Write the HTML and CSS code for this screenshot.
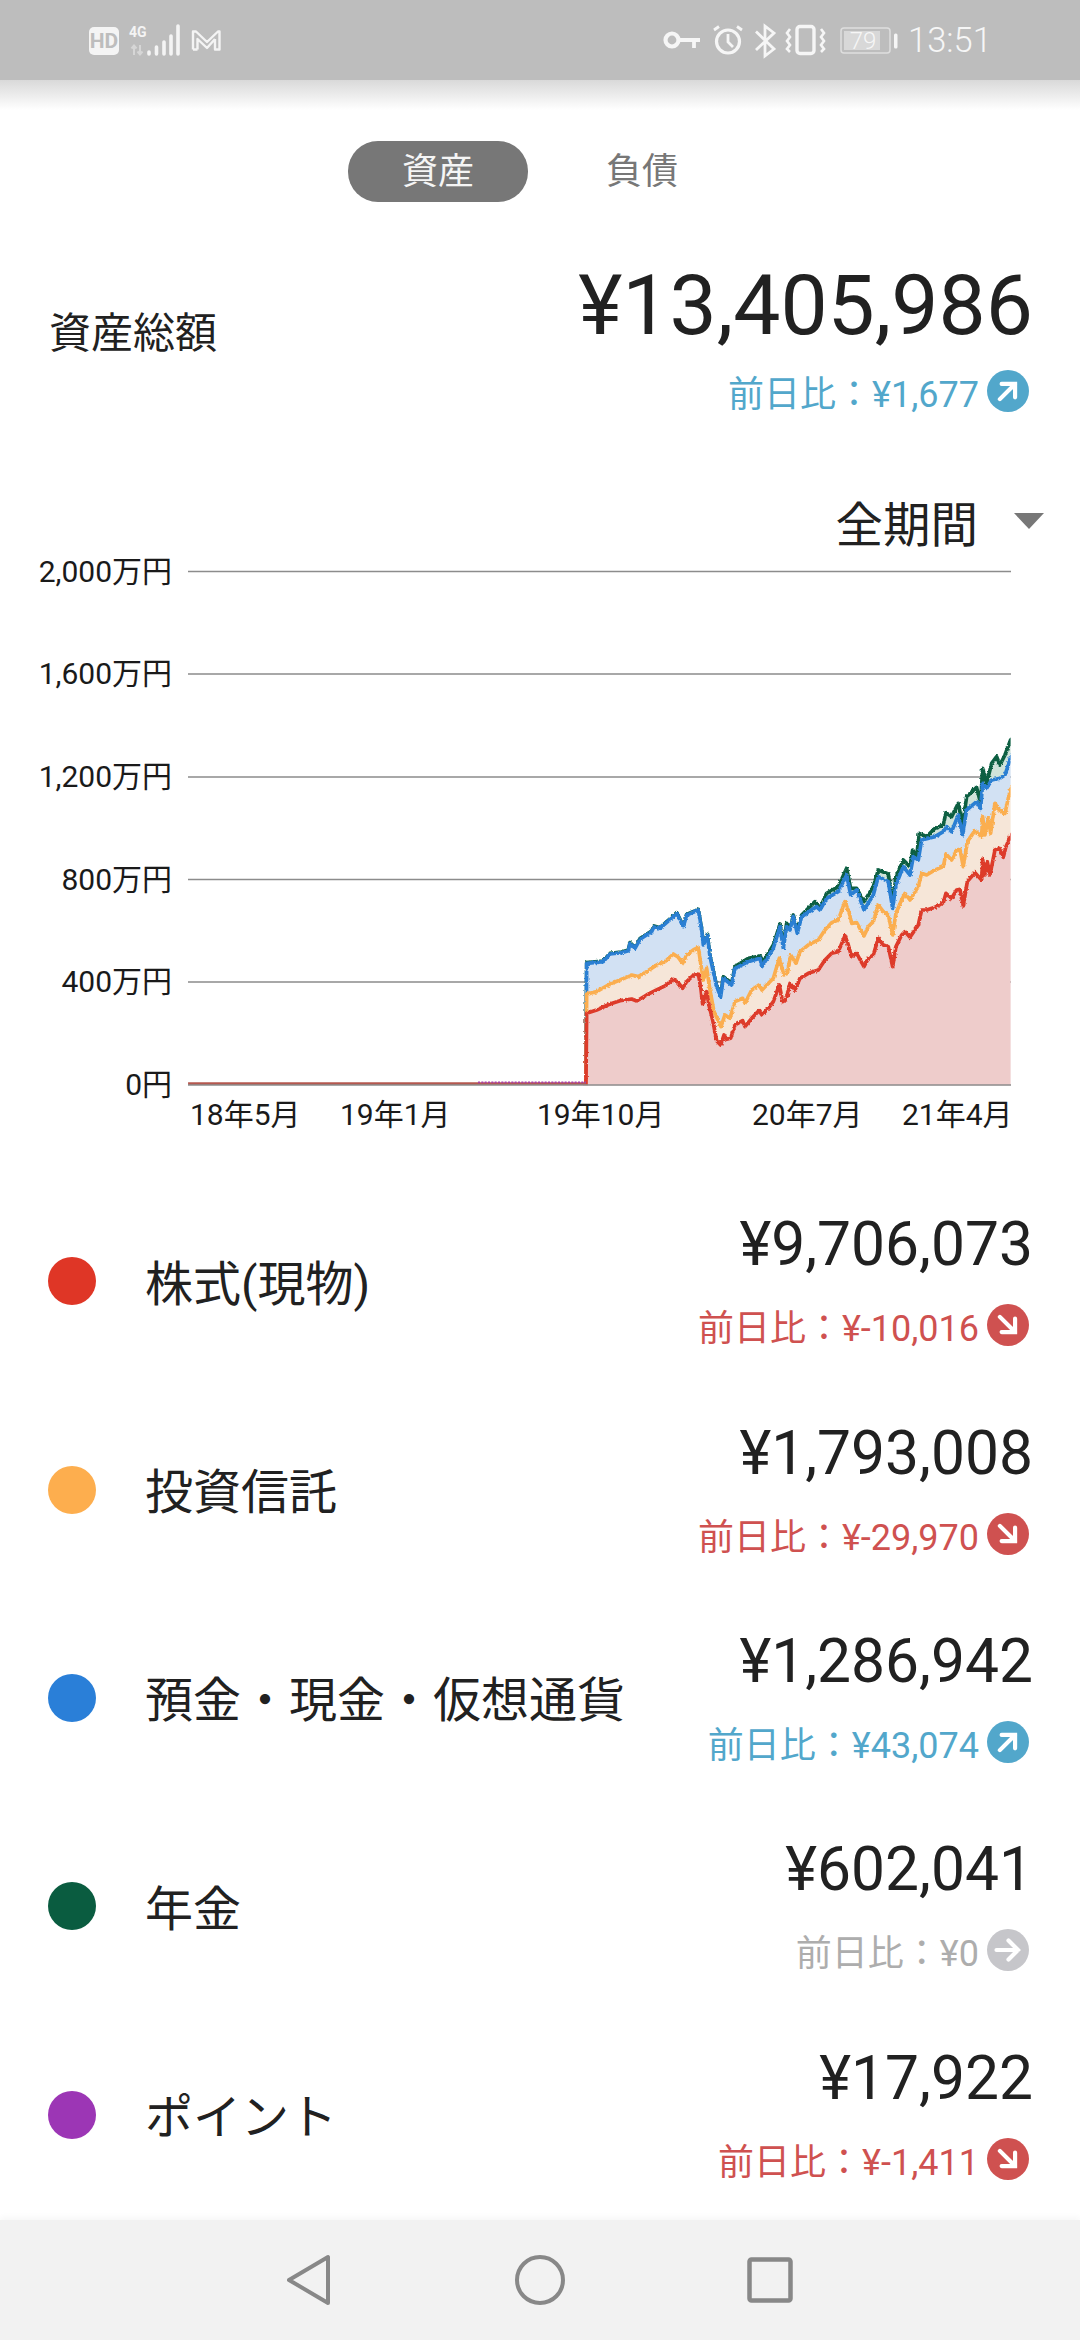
FILE: index.html
```html
<!DOCTYPE html>
<html lang="ja">
<head>
  <meta charset="UTF-8">
  <title>資産</title>
  <link rel="stylesheet" href="styles.css">
</head>
<body>

  <svg class="defs" width="0" height="0">
    <symbol id="arrow" viewBox="0 0 42 42">
      <path d="M9.500 21H31M21.500 11.500L31 21 21.500 30.500" fill="none" stroke="#fff" stroke-width="4.200" stroke-linecap="round"/>
    </symbol>
    <filter id="jitter" filterUnits="userSpaceOnUse" x="-1300" y="0" width="2800" height="1300">
      <feTurbulence type="fractalNoise" baseFrequency="0.15" numOctaves="2" seed="4"/>
      <feDisplacementMap in="SourceGraphic" scale="9" xChannelSelector="R" yChannelSelector="G"/>
    </filter>
  </svg>

  <div class="status-bar">
    <svg class="status-left" width="140" height="40" viewBox="89 22 140 40">
      <rect x="89" y="27" width="30" height="28" rx="5" fill="#f4f4f4"/>
      <text class="hd" x="104" y="48" text-anchor="middle">HD</text>
      <text class="net" x="129" y="37">4G</text>
      <path d="M134 55V46M131.500 48.500L134 45.500 136.500 48.500M140 45V54M137.500 51.500L140 54.500 142.500 51.500" fill="none" stroke="#d6d6d6" stroke-width="2"/>
      <path d="M149 54V52M156.500 54V47M164 54V42M171 54V36M178 54V26" fill="none" stroke="#f4f4f4" stroke-width="3.600" stroke-linecap="round"/>
      <path d="M193 49.500V31.500H196L207 42 218 31.500H219.500V49.500H215V39M197.500 49.500V39L207 48 215 39M193 49.500H197.500" fill="none" stroke="#f4f4f4" stroke-width="2.400" stroke-linejoin="round"/>
    </svg>
    <svg class="status-right" width="260" height="40" viewBox="660 22 260 40">
      <circle cx="672" cy="40" r="6.500" fill="none" stroke="#f6f6f6" stroke-width="4.200"/>
      <path d="M679 40H700M694 40V48" fill="none" stroke="#f6f6f6" stroke-width="3.800"/>
      <circle cx="728" cy="41.500" r="11.500" fill="none" stroke="#f6f6f6" stroke-width="3.200"/>
      <path d="M728 34V42L733 47M714 30L719 26.500M742 30L737 26.500" fill="none" stroke="#f6f6f6" stroke-width="2.800"/>
      <path d="M756 31.500L774 49 765 56V26L774 33 756 50" fill="none" stroke="#f6f6f6" stroke-width="2.800"/>
      <rect x="797" y="26.500" width="17" height="27" rx="3" fill="none" stroke="#f6f6f6" stroke-width="3.400"/>
      <path d="M790 29L787 33 790 37 787 41 790 45 787 49 790 52M821 29L824 33 821 37 824 41 821 45 824 49 821 52" fill="none" stroke="#f6f6f6" stroke-width="2.600"/>
      <rect x="841" y="28" width="49" height="25" rx="3" fill="none" stroke="#dedede" stroke-width="1.500"/>
      <rect x="844" y="31" width="36" height="19" fill="#d8d8d8"/>
      <text class="battery" x="863" y="49" text-anchor="middle">79</text>
      <rect x="894" y="33.500" width="3.500" height="15" rx="1.500" fill="#f6f6f6"/>
    </svg>
    <span class="clock">13:51</span>
  </div>

  <div class="main">
    <div class="tabs">
      <div class="tab active">資産</div>
      <div class="tab">負債</div>
    </div>

    <div class="total">
      <div class="total-label">資産総額</div>
      <div class="figures">
        <div class="total-value">¥13,405,986</div>
        <div class="delta up">前日比：¥1,677
          <svg class="delta-icon" width="42" height="42"><circle cx="21" cy="21" r="21" fill="currentColor"/><use href="#arrow" width="42" height="42" transform="rotate(-45 21 21)"/></svg>
        </div>
      </div>
    </div>

    <div class="period">全期間<span class="caret"></span></div>

    <svg class="chart" width="1080" height="588" viewBox="0 552 1080 588">
      <clipPath id="plot"><rect x="-1116" y="0" width="2468" height="1156"/></clipPath>

      <path class="grid" d="M188 571.500H1011M188 674H1011M188 777H1011M188 879.500H1011M188 982H1011"/>

      <text class="axis" x="172" y="582" text-anchor="end">2,000万円</text>
      <text class="axis" x="172" y="684" text-anchor="end">1,600万円</text>
      <text class="axis" x="172" y="787" text-anchor="end">1,200万円</text>
      <text class="axis" x="172" y="890" text-anchor="end">800万円</text>
      <text class="axis" x="172" y="992" text-anchor="end">400万円</text>
      <text class="axis" x="172" y="1095" text-anchor="end">0円</text>

      <text class="axis" x="190" y="1125">18年5月</text>
      <text class="axis" x="340" y="1125">19年1月</text>
      <text class="axis" x="537" y="1125">19年10月</text>
      <text class="axis" x="752" y="1125">20年7月</text>
      <text class="axis" x="902" y="1125">21年4月</text>

      <!-- series traced in a 3x grid from (560,700) -->
      <g transform="translate(560 700) scale(0.3333)" clip-path="url(#plot)">
        <g filter="url(#jitter)">
          <polygon class="series s-green" points="78,1170 78,1146 80,788 130,783 150,760 185,756 205,750 210,728 225,743 240,716 275,693 282,678 300,683 340,648 350,638 370,678 380,643 415,628 425,688 430,733 442,703 450,768 470,858 482,888 490,830 515,850 525,800 565,775 600,768 610,785 640,735 660,672 670,735 680,670 692,685 700,645 712,690 725,645 765,605 780,625 800,580 835,560 860,505 872,565 890,565 912,605 940,560 955,510 985,522 998,610 1008,530 1030,480 1050,500 1058,450 1070,470 1078,400 1100,410 1125,385 1150,375 1158,338 1175,350 1195,310 1208,375 1220,290 1250,262 1262,310 1268,205 1280,250 1295,190 1310,170 1320,195 1335,165 1352,120 1365,110 1365,1170"/>
          <polygon class="series s-blue" points="78,1170 78,1146 80,790 130,785 150,762 185,758 205,752 210,730 225,745 240,718 275,695 282,680 300,685 340,650 350,640 370,680 380,645 415,630 425,690 430,735 442,705 450,770 470,860 482,890 490,835 515,855 525,805 565,785 600,775 606,800 640,745 660,680 670,745 680,680 690,690 700,650 712,700 725,650 770,620 780,630 800,595 835,575 860,525 872,585 890,570 912,630 940,585 955,530 985,545 998,625 1008,555 1030,500 1050,525 1060,470 1075,480 1085,420 1125,410 1150,395 1160,380 1175,395 1195,345 1208,405 1220,330 1250,305 1262,325 1268,250 1280,265 1295,240 1320,235 1335,225 1345,195 1352,170 1365,150 1365,1170"/>
          <polygon class="series s-orange" points="78,1170 78,1148 80,882 110,875 150,852 180,840 215,825 235,830 260,815 290,795 315,785 340,762 355,772 368,790 380,765 400,750 415,742 422,790 430,840 440,805 450,870 462,935 483,980 495,945 510,955 525,905 548,895 555,910 575,870 597,855 606,870 640,835 658,775 672,825 682,820 692,765 708,790 720,755 745,735 775,720 795,690 815,668 835,660 855,605 868,640 875,670 890,668 912,708 925,680 940,665 955,615 970,635 985,645 998,705 1008,640 1025,600 1035,580 1050,600 1075,560 1085,520 1100,525 1125,510 1150,500 1158,462 1175,480 1190,450 1200,448 1210,500 1222,425 1245,392 1265,410 1268,350 1275,405 1285,355 1292,400 1305,310 1318,330 1335,340 1345,295 1352,268 1365,250 1365,1170"/>
          <polygon class="series s-red" points="78,1170 78,1149 80,940 110,930 150,912 180,902 215,897 230,903 260,885 290,870 315,858 340,838 355,848 368,865 380,845 400,826 415,822 422,860 428,912 440,875 448,920 458,960 470,1022 482,1035 492,1005 500,1018 512,1015 525,975 548,962 555,980 575,955 597,932 606,945 625,925 640,905 658,855 668,905 678,900 690,850 705,870 720,835 745,820 775,810 795,780 815,760 835,755 855,707 865,735 875,770 890,760 912,800 925,775 940,765 955,715 970,735 985,740 998,800 1008,740 1025,705 1035,695 1050,712 1075,675 1085,630 1100,630 1125,622 1150,608 1158,580 1175,595 1190,570 1200,568 1210,618 1222,545 1245,518 1265,540 1268,478 1275,525 1282,485 1290,525 1305,450 1318,445 1330,472 1338,440 1352,408 1365,390 1365,1170"/>
        </g>
        <path class="flatline" d="M-1116 1151H78"/>
        <path class="dust" d="M-246 1147H78"/>
      </g>

      <path class="baseline" d="M188 1085H1011"/>
    </svg>

    <div class="row">
      <span class="dot red"></span>
      <div class="name">株式(現物)</div>
      <div class="figures">
        <div class="value">¥9,706,073</div>
        <div class="delta down">前日比：¥-10,016
          <svg class="delta-icon" width="42" height="42"><circle cx="21" cy="21" r="21" fill="currentColor"/><use href="#arrow" width="42" height="42" transform="rotate(45 21 21)"/></svg>
        </div>
      </div>
    </div>

    <div class="row">
      <span class="dot orange"></span>
      <div class="name">投資信託</div>
      <div class="figures">
        <div class="value">¥1,793,008</div>
        <div class="delta down">前日比：¥-29,970
          <svg class="delta-icon" width="42" height="42"><circle cx="21" cy="21" r="21" fill="currentColor"/><use href="#arrow" width="42" height="42" transform="rotate(45 21 21)"/></svg>
        </div>
      </div>
    </div>

    <div class="row">
      <span class="dot blue"></span>
      <div class="name">預金・現金・仮想通貨</div>
      <div class="figures">
        <div class="value">¥1,286,942</div>
        <div class="delta up">前日比：¥43,074
          <svg class="delta-icon" width="42" height="42"><circle cx="21" cy="21" r="21" fill="currentColor"/><use href="#arrow" width="42" height="42" transform="rotate(-45 21 21)"/></svg>
        </div>
      </div>
    </div>

    <div class="row">
      <span class="dot green"></span>
      <div class="name">年金</div>
      <div class="figures">
        <div class="value">¥602,041</div>
        <div class="delta flat">前日比：¥0
          <svg class="delta-icon" width="42" height="42"><circle cx="21" cy="21" r="21" fill="currentColor"/><use href="#arrow" width="42" height="42"/></svg>
        </div>
      </div>
    </div>

    <div class="row">
      <span class="dot purple"></span>
      <div class="name">ポイント</div>
      <div class="figures">
        <div class="value">¥17,922</div>
        <div class="delta down">前日比：¥-1,411
          <svg class="delta-icon" width="42" height="42"><circle cx="21" cy="21" r="21" fill="currentColor"/><use href="#arrow" width="42" height="42" transform="rotate(45 21 21)"/></svg>
        </div>
      </div>
    </div>
  </div>

  <div class="nav-bar">
    <svg width="46" height="54" viewBox="0 0 46 54">
      <path d="M41 4V50L2 27Z" fill="none" stroke="#888" stroke-width="4" stroke-linejoin="round"/>
    </svg>
    <svg width="54" height="54" viewBox="0 0 54 54">
      <circle cx="27" cy="27" r="23" fill="none" stroke="#888" stroke-width="4"/>
    </svg>
    <svg width="46" height="46" viewBox="0 0 46 46">
      <rect x="2.500" y="2.500" width="41" height="41" rx="2" fill="none" stroke="#888" stroke-width="4.500"/>
    </svg>
  </div>

</body>
</html>
```

FILE: styles.css
```css
html, body {
  margin: 0;
  padding: 0;
}
body {
  width: 1080px;
  height: 2340px;
  overflow: hidden;
  display: flex;
  flex-direction: column;
  background-color: white;
  color: #212121;
  font-family: Roboto, "Noto Sans CJK JP", sans-serif;
}
.defs {
  position: absolute;
}

/* status bar */
.status-bar {
  height: 80px;
  flex: none;
  display: flex;
  align-items: center;
  padding-left: 89px;
  background-color: #bdbdbd;
}
.status-bar svg {
  display: block;
}
.status-left {
  margin-top: 4px;
}
.status-right {
  margin-left: 431px;
  margin-top: 4px;
}
.hd {
  font: bold 21px Roboto, sans-serif;
  fill: #bdbdbd;
}
.net {
  font: bold 14px Roboto, sans-serif;
  fill: #f4f4f4;
}
.battery {
  font: 300 24px Roboto, sans-serif;
  fill: #f6f6f6;
}
.clock {
  margin-left: -12px;
  font-size: 34.500px;
  font-weight: 300;
  color: #f6f6f6;
}

/* content */
.main {
  flex: 1;
  min-height: 0;
  background: linear-gradient(#d9d9d9, white 30px) no-repeat;
}
.tabs {
  display: flex;
  justify-content: center;
  gap: 24px;
  padding-top: 61px;
}
.tab {
  width: 180px;
  height: 61px;
  line-height: 63px;
  text-align: center;
  font-size: 36px;
  color: #777;
  border-radius: 30px;
}
.tab.active {
  background-color: #777;
  color: #f5f5f5;
}

.total {
  display: flex;
  justify-content: space-between;
  align-items: center;
  margin-top: 64px;
  padding: 0 49px;
}
.total-label {
  padding-bottom: 20px;
  font-size: 42px;
}
.figures {
  text-align: right;
}
.total-value {
  margin-right: -2px;
  font-size: 84px;
  line-height: 80px;
}
.delta {
  display: flex;
  justify-content: flex-end;
  align-items: center;
  gap: 8px;
  height: 42px;
  margin-top: 24px;
  padding-right: 2px;
  font-size: 36px;
}
.delta.up {
  color: #52a7cb;
}
.delta.down {
  color: #cf5150;
}
.delta.flat {
  color: #adadad;
}
.delta.flat .delta-icon {
  color: #c6c6ca;
}

.period {
  display: flex;
  justify-content: flex-end;
  align-items: center;
  height: 50px;
  margin: 84px 0 6px;
  padding-right: 36px;
  font-size: 47.500px;
}
.caret {
  width: 0;
  height: 0;
  margin-left: 36px;
  border-left: 15px solid transparent;
  border-right: 15px solid transparent;
  border-top: 16px solid #777;
}

.chart {
  display: block;
}
.grid, .baseline {
  fill: none;
  stroke: #8c8c8c;
  stroke-width: 1.500;
}
.axis {
  font-size: 30px;
  fill: #1a1a1a;
}
.series {
  stroke-width: 11;
  stroke-linejoin: round;
}
.s-green {
  fill: #d0e3da;
  stroke: #0c5f43;
}
.s-blue {
  fill: #d2e1f3;
  stroke: #2b7fd3;
}
.s-orange {
  fill: #f6e6d8;
  stroke: #fbae4f;
}
.s-red {
  fill: #eecccb;
  stroke: #dd3a2a;
}
.flatline {
  fill: none;
  stroke: #b5584f;
  stroke-width: 8;
}
.dust {
  fill: none;
  stroke: #a83fa8;
  stroke-width: 5;
  stroke-dasharray: 6 4;
}

/* asset rows */
.row {
  display: flex;
  align-items: center;
  height: 208.400px;
  padding: 0 49px 0 48px;
  box-sizing: border-box;
}
.chart + .row {
  margin-top: 37px;
}
.row .figures {
  padding-bottom: 6px;
}
.dot {
  width: 48px;
  height: 48px;
  flex: none;
  border-radius: 50%;
}
.dot.red {
  background-color: #df3626;
}
.dot.orange {
  background-color: #fdae4e;
}
.dot.blue {
  background-color: #2a7fd8;
}
.dot.green {
  background-color: #0a5c40;
}
.dot.purple {
  background-color: #9c36b5;
}
.name {
  flex: 1;
  margin-left: 49px;
  padding-bottom: 3px;
  font-size: 48px;
}
.value {
  margin-right: -2px;
  font-size: 60.500px;
  line-height: 70px;
}

/* navigation */
.nav-bar {
  height: 120px;
  flex: none;
  display: flex;
  justify-content: center;
  align-items: center;
  gap: 180px;
  background-color: #f2f2f2;
  box-shadow: 0 -3px 6px rgba(0, 0, 0, 0.03);
}
```
